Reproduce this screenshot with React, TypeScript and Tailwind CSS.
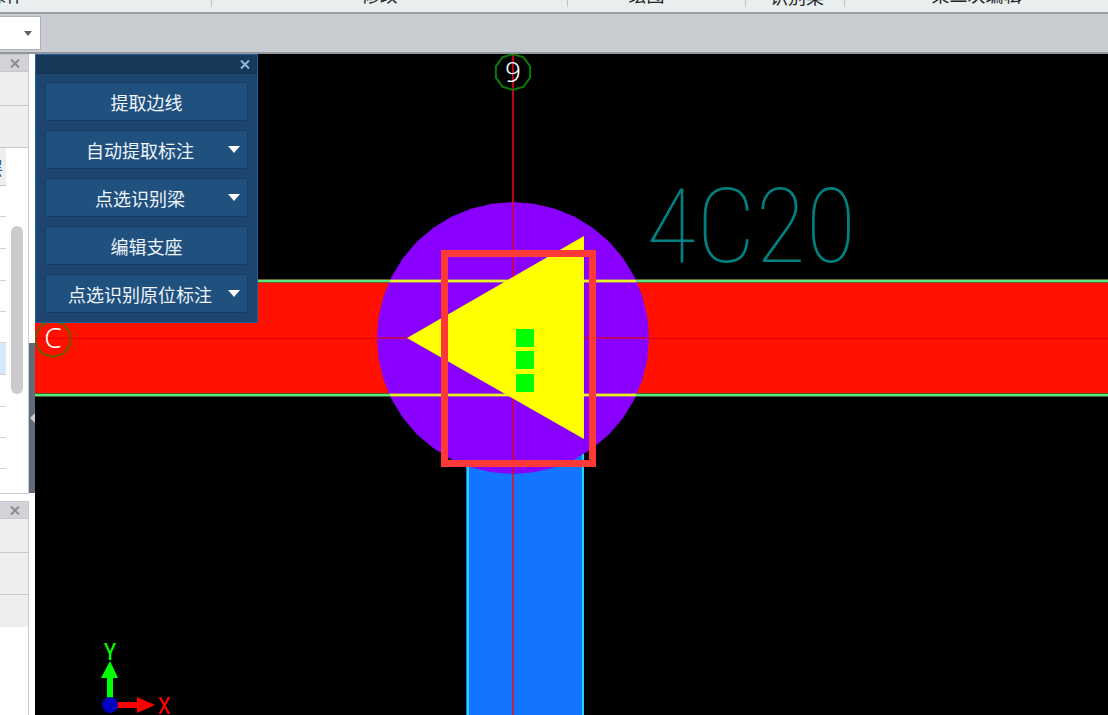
import React from "react";

const ribbonGroups = [
  { label: "操作", width: "w-[212px]", text: "-ml-3 -mt-[15px] text-left" },
  { label: "修改", width: "w-[356px]", text: "-mt-[15px] pr-5 text-center" },
  { label: "绘图", width: "w-[178px]", text: "-mt-[15px] pr-5 text-center" },
  { label: "识别梁", width: "w-[99px]", text: "-mt-[13px] pl-1 text-center" },
];

const commands = [
  { label: "提取边线", menu: false },
  { label: "自动提取标注", menu: true },
  { label: "点选识别梁", menu: true },
  { label: "编辑支座", menu: false },
  { label: "点选识别原位标注", menu: true },
];

const rows = [
  "h-8",
  "h-8",
  "h-[31px]",
  "h-[31px]",
  "h-8 bg-[#d6e8fb]",
  "h-8",
  "h-[31px]",
  "h-[31px]",
];

function CloseGlyph() {
  return (
    <svg width="10" height="9" viewBox="0 0 10 9" aria-hidden="true">
      <path d="M1 0.5 L9 8.5 M9 0.5 L1 8.5" stroke="currentColor" strokeWidth="2" />
    </svg>
  );
}

function Ribbon() {
  return (
    <header className="flex h-[14px] shrink-0 overflow-hidden border-b-2 border-[#979da1] bg-[#e9eeef] text-lg leading-[18px] text-[#222222]">
      {ribbonGroups.map((g) => (
        <div key={g.label} className={"flex items-start " + g.width}>
          <span className={"flex-1 " + g.text}>{g.label}</span>
          <span className="h-[7px] w-px bg-[#c3c5c6]" />
        </div>
      ))}
      <div className="flex flex-1 justify-center">
        <span className="-mt-[15px]">梁二次编辑</span>
      </div>
    </header>
  );
}

function OptionsBar() {
  return (
    <div className="flex h-10 shrink-0 items-center border-b-2 border-[#92969b] bg-[#c9ccd0]">
      <div className="relative h-[34px] w-[41px] border border-l-0 border-[#afb1b3] bg-white">
        <select aria-label="选项" className="h-full w-full appearance-none bg-white outline-none">
          <option value=""></option>
        </select>
        <svg className="pointer-events-none absolute top-[14px] right-2" width="8" height="5" viewBox="0 0 8 5" aria-hidden="true">
          <path d="M0 0 H8 L4 5 Z" fill="#626262" />
        </svg>
      </div>
    </div>
  );
}

function DockHeader() {
  return (
    <div className="flex h-[18px] items-center justify-end border-y border-[#c5c8cc] bg-[#d2d3d8] pr-2 text-[#8c8c8c]">
      <button type="button" aria-label="关闭" className="flex">
        <CloseGlyph />
      </button>
    </div>
  );
}

function LeftDock() {
  return (
    <aside className="flex w-[35px] shrink-0 bg-white">
      <div className="flex w-[29px] flex-col">
        <section className="flex h-[440px] flex-col border-r border-b border-[#c8cace]">
          <DockHeader />
          <div className="h-[34px] border-b border-[#c5c8cc] bg-[#eeeeee]" />
          <div className="h-[42px] border-b border-[#c5c8cc] bg-[#eeeeee]" />
          <div className="flex flex-1">
            <div className="w-[6px] overflow-hidden">
              <div className="flex h-[38px] items-center justify-end border-b border-[#c8c8c8] bg-[#eeeeee] pr-[3px] text-lg text-[#2c5c94]">
                层
              </div>
              <div className="h-[31px] border-b border-[#d4d4d4]" />
              {rows.map((row, i) => (
                <div key={i} className={"border-b border-[#d4d4d4] " + row} />
              ))}
            </div>
            <div className="ml-[5px] flex w-3 flex-col pt-[78px]">
              <div className="h-[168px] rounded-full bg-[#cbcbcb]" />
            </div>
          </div>
        </section>
        <section className="mt-[7px] flex flex-1 flex-col border-r border-[#c8cace]">
          <DockHeader />
          <div className="h-[34px] border-b border-[#c5c8cc] bg-[#eeeeee]" />
          <div className="h-[42px] border-b border-[#c5c8cc] bg-[#eeeeee]" />
          <div className="h-8 bg-[#eeeeee]" />
        </section>
      </div>
      <div className="flex w-[6px] flex-col pt-[289px]">
        <button type="button" aria-label="收起" className="flex h-[150px] items-center justify-end bg-[#616c78]">
          <svg width="5" height="10" viewBox="0 0 5 10" aria-hidden="true">
            <path d="M5 0 V10 L0 5 Z" fill="#c9ced3" />
          </svg>
        </button>
      </div>
    </aside>
  );
}

function CommandPanel() {
  return (
    <section className="absolute top-0 left-0 w-[223px] border border-[#245f97] bg-[#1c466f]">
      <div className="flex h-[19px] items-center justify-end border-b border-[#153252] bg-[#163859] pt-px pr-[7px] text-[#8bbbe5]">
        <button type="button" aria-label="关闭" className="flex">
          <CloseGlyph />
        </button>
      </div>
      <div className="flex flex-col gap-[9px] px-[9px] pt-2 pb-[9px]">
        {commands.map((c) => (
          <button
            key={c.label}
            type="button"
            className="flex h-[39px] items-center rounded-xs border border-[#183c60] bg-[#20507e] text-lg text-[#eef4fa]"
          >
            <span className={c.menu ? "flex-1 pl-1.5 text-center" : "flex-1 text-center"}>{c.label}</span>
            {c.menu && (
              <svg className="mr-[7px]" width="12" height="7" viewBox="0 0 12 7" aria-hidden="true">
                <path d="M0 0 H12 L6 7 Z" fill="#ffffff" />
              </svg>
            )}
          </button>
        ))}
      </div>
    </section>
  );
}

function ring(cx: number, cy: number, r: number, sides: number) {
  return Array.from({ length: sides }, (_, i) => {
    const a = (i * 2 * Math.PI) / sides - Math.PI / 2;
    return `${(cx + r * Math.cos(a)).toFixed(1)},${(cy + r * Math.sin(a)).toFixed(1)}`;
  }).join(" ");
}

function Drawing() {
  return (
    <svg className="absolute inset-0 h-full w-full" aria-label="梁平面图">
      <defs>
        <clipPath id="column">
          <polygon points={ring(478, 284, 136, 40)} />
        </clipPath>
      </defs>

      <rect x="431" y="341" width="118" height="100%" fill="#1274ff" />
      <path d="M433 341 V4000 M548 341 V4000" stroke="#25d5f5" strokeWidth="2" />

      <rect x="0" y="227" width="100%" height="114" fill="#ff1000" />
      <rect x="0" y="225" width="100%" height="4" fill="#65652a" />
      <rect x="0" y="226" width="100%" height="2" fill="#5fe682" />
      <rect x="0" y="339" width="100%" height="4" fill="#3f6824" />
      <rect x="0" y="340" width="100%" height="2" fill="#5fe682" />

      <polygon points={ring(478, 284, 136, 40)} fill="#8a00ff" />
      <g clipPath="url(#column)">
        <rect x="0" y="225" width="100%" height="4" fill="#a56799" />
        <rect x="0" y="226" width="100%" height="2" fill="#eaf026" />
        <rect x="0" y="339" width="100%" height="4" fill="#a56799" />
        <rect x="0" y="340" width="100%" height="2" fill="#eaf026" />
      </g>
      <rect x="0" y="284" width="100%" height="1" fill="#df0010" />
      <rect x="342" y="283" width="272" height="2" fill="#bb0070" />
      <rect x="477" y="0" width="2" height="100%" fill="#bc0018" />
      <rect x="477" y="148" width="2" height="271" fill="#c4005a" />
      <rect x="477" y="420" width="2" height="100%" fill="#b42455" />

      <polygon points="372,284 549,182 549,385" fill="#ffff00" />
      <path d="M481 275h18v18h-18z M481 297h18v18h-18z M481 320h18v18h-18z" fill="#00ff00" />

      <polygon points={ring(478, 18, 18, 10)} fill="none" stroke="#087a08" strokeWidth="2" />
      <text x="478" y="28" textAnchor="middle" fontSize="28" fill="#ffffff" className="font-['Noto_Sans',sans-serif] font-light">
        9
      </text>
      <polygon points={ring(18, 285, 18, 10)} fill="none" stroke="#655d00" strokeWidth="2" />
      <text x="18" y="294" textAnchor="middle" fontSize="28" fill="#ffffff" className="font-['Noto_Sans',sans-serif] font-light">
        C
      </text>

      <text
        x="716"
        y="208"
        textAnchor="middle"
        fontSize="104"
        fill="#008080"
        className="font-['Roboto_Condensed','Noto_Sans_CJK_SC',sans-serif] font-thin"
      >
        4C20
      </text>

      <rect x="409.5" y="199.5" width="148" height="210" fill="none" stroke="#fd3838" strokeWidth="7" />

      <rect x="72" y="622" width="6" height="24" fill="#00ff00" />
      <polygon points="75,607 66,624 83,624" fill="#00ff00" />
      <rect x="80" y="648" width="24" height="6" fill="#ff0000" />
      <polygon points="120,651 102,643 102,659" fill="#ff0000" />
      <circle cx="75" cy="651" r="8" fill="#0000c0" />
      <text x="75" y="606" textAnchor="middle" fontSize="24" fill="#00ff00" className="font-['Roboto_Condensed','Noto_Sans',sans-serif]">
        Y
      </text>
      <text x="129" y="660" textAnchor="middle" fontSize="24" fill="#ff0000" className="font-['Roboto_Condensed','Noto_Sans',sans-serif]">
        X
      </text>
    </svg>
  );
}

export default function App() {
  return (
    <div className="flex min-h-screen flex-col bg-white font-['Noto_Sans_CJK_SC',sans-serif]">
      <Ribbon />
      <OptionsBar />
      <main className="flex flex-1">
        <LeftDock />
        <div className="relative flex-1 overflow-hidden bg-black">
          <Drawing />
          <CommandPanel />
        </div>
      </main>
    </div>
  );
}
